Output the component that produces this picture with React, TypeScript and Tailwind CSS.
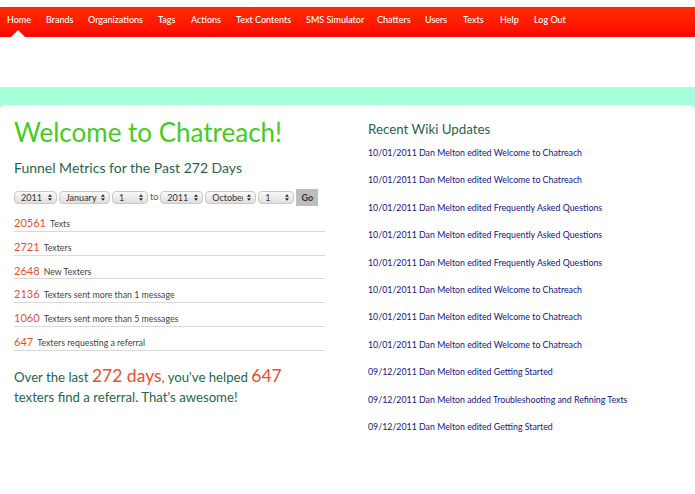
const NAV_ITEMS = [
  { label: "Home", width: "w-[39px]" },
  { label: "Brands", width: "w-[42px]" },
  { label: "Organizations", width: "w-[70px]" },
  { label: "Tags", width: "w-[33px]" },
  { label: "Actions", width: "w-[45px]" },
  { label: "Text Contents", width: "w-[70px]" },
  { label: "SMS Simulator", width: "w-[71px]" },
  { label: "Chatters", width: "w-[48px]" },
  { label: "Users", width: "w-[38px]" },
  { label: "Texts", width: "w-[37px]" },
  { label: "Help", width: "w-[34px]" },
  { label: "Log Out", width: "w-[44px]" },
];

const METRICS = [
  { value: "20561", label: "Texts" },
  { value: "2721", label: "Texters" },
  { value: "2648", label: "New Texters" },
  { value: "2136", label: "Texters sent more than 1 message" },
  { value: "1060", label: "Texters sent more than 5 messages" },
  { value: "647", label: "Texters requesting a referral" },
];

const WIKI_UPDATES = [
  "10/01/2011 Dan Melton edited Welcome to Chatreach",
  "10/01/2011 Dan Melton edited Welcome to Chatreach",
  "10/01/2011 Dan Melton edited Frequently Asked Questions",
  "10/01/2011 Dan Melton edited Frequently Asked Questions",
  "10/01/2011 Dan Melton edited Frequently Asked Questions",
  "10/01/2011 Dan Melton edited Welcome to Chatreach",
  "10/01/2011 Dan Melton edited Welcome to Chatreach",
  "10/01/2011 Dan Melton edited Welcome to Chatreach",
  "09/12/2011 Dan Melton edited Getting Started",
  "09/12/2011 Dan Melton added Troubleshooting and Refining Texts",
  "09/12/2011 Dan Melton edited Getting Started",
];

function DateSelect({ value, width }: { value: string; width: string }) {
  return (
    <span className={`relative block h-[13px] ${width}`}>
      <select
        defaultValue={value}
        className="block h-full w-full appearance-none rounded-[4px] border border-[#c9c9c9] bg-gradient-to-b from-[#fafafa] to-[#dedede] pl-[6px] pr-[12px] text-[9px] leading-[11px] text-[#333] outline-none"
      >
        <option>{value}</option>
      </select>
      <svg
        viewBox="0 0 6 10"
        className="pointer-events-none absolute right-[5px] top-[3px] h-[7px] w-[4px] fill-[#222]"
        aria-hidden
      >
        <path d="M3 0 6 4H0zM3 10 0 6h6z" />
      </svg>
    </span>
  );
}

export default function App() {
  return (
    <div className="h-[494px] w-[695px] overflow-hidden bg-white font-['Lato',sans-serif]">
      <div className="h-[7px]" />
      <nav className="flex h-[30px] bg-gradient-to-b from-[#ff2a00] to-[#ff0000] pl-[7px] shadow-[0_1px_2px_rgba(255,80,60,0.3)]">
        {NAV_ITEMS.map((item, i) => (
          <a
            key={item.label}
            className={`relative block shrink-0 whitespace-nowrap pt-[6px] text-[9px] font-medium leading-[13px] text-white ${item.width}`}
          >
            {item.label}
            {i === 0 && (
              <span className="absolute bottom-0 left-[4px] h-0 w-0 border-x-[7px] border-b-[7px] border-x-transparent border-b-white" />
            )}
          </a>
        ))}
      </nav>

      <div className="h-[50px] rounded-b-[5px] bg-white" />
      <div className="bg-[#a6ffda]">
        <div className="h-[18px]" />
        <main className="flex h-[389px] rounded-t-[5px] bg-white pl-[14px] pt-[10px]">
          <section className="w-[354px] shrink-0">
            <h1 className="text-[26px] leading-[34px] text-[#44cc22]">Welcome to Chatreach!</h1>
            <h2 className="mt-[9px] text-[14px] leading-[20px] text-[#1f6650]">
              Funnel Metrics for the Past 272 Days
            </h2>

            <form className="mt-[10px] flex h-[18px] items-center gap-[2px] text-[9px] text-[#555]">
              <DateSelect value="2011" width="w-[43px]" />
              <DateSelect value="January" width="w-[51px]" />
              <DateSelect value="1" width="w-[36px]" />
              <span>to</span>
              <DateSelect value="2011" width="w-[43px]" />
              <DateSelect value="October" width="w-[51px]" />
              <DateSelect value="1" width="w-[36px]" />
              <button
                type="button"
                className="h-[17px] w-[22px] bg-[#bdbdbd] text-[9px] font-bold leading-[17px] text-[#333]"
              >
                Go
              </button>
            </form>

            <ul className="mt-[2px] w-[311px]">
              {METRICS.map((m) => (
                <li key={m.value} className="h-[23.8px] border-b border-[#d9d9d9] pt-[1px]">
                  <span className="text-[11px] leading-[16px] text-[#e8502e]">{m.value}</span>{" "}
                  <span className="text-[8.8px] leading-[16px] text-[#444]">{m.label}</span>
                </li>
              ))}
            </ul>

            <p className="mt-[15px] w-[300px] text-[13.2px] leading-[20px] text-[#1f6650]">
              Over the last <span className="text-[17.5px] text-[#e8502e]">272 days</span>, you've
              helped <span className="text-[17.5px] text-[#e8502e]">647</span> texters find a
              referral. That's awesome!
            </p>
          </section>

          <section className="pt-[4px]">
            <h2 className="text-[13.3px] leading-[20px] text-[#1f6650]">Recent Wiki Updates</h2>
            <ul className="mt-[5px]">
              {WIKI_UPDATES.map((line, i) => (
                <li key={i} className="h-[27.4px] pt-[2px] text-[8.8px] leading-[14px] text-[#14147f]">
                  {line}
                </li>
              ))}
            </ul>
          </section>
        </main>
      </div>
    </div>
  );
}
